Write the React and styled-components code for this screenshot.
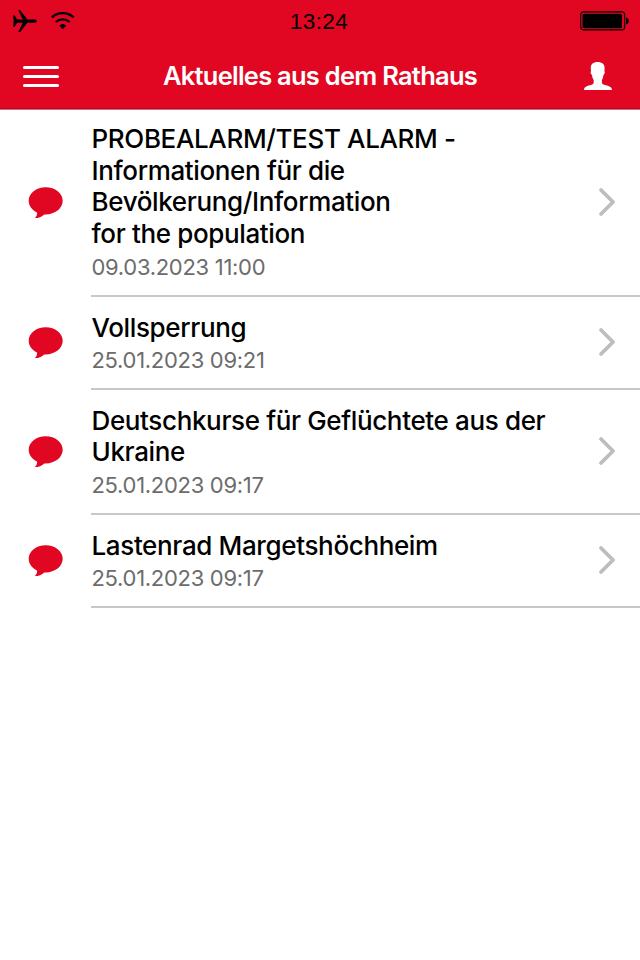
import React from "react";
import styled, { createGlobalStyle } from "styled-components";

const GlobalStyle = createGlobalStyle`
  :root {
    --color-red: #e10722;
    --color-red-dark: #b4061b;
    --color-red-soft: #d8707c;
    --color-white: #ffffff;
    --color-line: #c8c7cc;
    --color-date: #6c6c6c;
  }
  * {
    box-sizing: border-box;
  }
  body {
    margin: 0;
    background-color: var(--color-white);
    font-family: Inter, "Liberation Sans", sans-serif;
    overflow: hidden;
  }
`;

const Screen = styled.div`
  display: flex;
  flex-direction: column;
  width: 640px;
  height: 960px;
`;

const Header = styled.header`
  height: 110px;
  background-color: var(--color-red);
  border-bottom: 1px solid var(--color-red-soft);
  box-shadow: inset 0 -1px 0 var(--color-red-dark);
`;

const StatusBar = styled.div`
  display: grid;
  grid-template-columns: 1fr auto 1fr;
  align-items: center;
  height: 40px;
  padding: 0 11px 0 12px;
  .left {
    display: flex;
    align-items: center;
    gap: 13px;
  }
  .battery {
    justify-self: end;
  }
  svg {
    display: block;
  }
`;

const Clock = styled.time`
  font-family: "Liberation Sans", Arial, sans-serif;
  font-size: 22.5px;
  line-height: 40px;
  padding: 2px 3px 0 0;
  letter-spacing: 0.4px;
`;

const NavBar = styled.nav`
  display: grid;
  grid-template-columns: 60px 1fr 60px;
  align-items: center;
  height: 68px;
  padding: 4px 27px 0 23px;
  svg {
    display: block;
  }
  .user {
    justify-self: end;
  }
`;

const MenuButton = styled.div`
  display: flex;
  flex-direction: column;
  gap: 6px;
  width: 36px;
  margin-top: 1px;
  span {
    height: 3px;
    border-radius: 2px;
    background-color: var(--color-white);
  }
`;

const Title = styled.h1`
  margin: 0;
  padding-left: 4px;
  font-size: 25.5px;
  font-weight: 600;
  line-height: 32px;
  letter-spacing: -0.75px;
  color: var(--color-white);
  text-align: center;
  white-space: nowrap;
`;

const List = styled.ul`
  margin: 0;
  padding: 0;
  list-style: none;
`;

const Item = styled.li`
  display: flex;
  height: ${(props) => props.$height}px;
  svg {
    display: block;
  }
`;

const IconCell = styled.div`
  display: flex;
  align-items: center;
  width: 91px;
  padding: 0 0 2px 28px;
`;

const Body = styled.div`
  display: flex;
  flex: 1;
  align-items: center;
  justify-content: space-between;
  padding: 0 24px 1px 0.5px;
  border-bottom: 2px solid var(--color-line);
`;

const Info = styled.div`
  align-self: flex-start;
  padding-top: ${(props) => (props.$long ? 13.4 : 15)}px;
  h2 {
    margin: 0;
    font-size: 26px;
    font-weight: 450;
    line-height: ${(props) => (props.$long ? 31.5 : 31.3)}px;
    letter-spacing: -0.36px;
    white-space: nowrap;
  }
  h2 span {
    display: block;
  }
  p {
    margin: ${(props) => (props.$long ? 4 : 3)}px 0 0;
    font-size: 22px;
    line-height: 28px;
    letter-spacing: -0.3px;
    color: var(--color-date);
  }
`;

const news = [
  {
    lines: [
      "PROBEALARM/TEST ALARM -",
      "Informationen für die",
      "Bevölkerung/Information",
      "for the population",
    ],
    date: "09.03.2023 11:00",
    height: 187,
  },
  { lines: ["Vollsperrung"], date: "25.01.2023 09:21", height: 93 },
  {
    lines: ["Deutschkurse für Geflüchtete aus der", "Ukraine"],
    date: "25.01.2023 09:17",
    height: 125,
  },
  {
    lines: ["Lastenrad Margetshöchheim"],
    date: "25.01.2023 09:17",
    height: 93,
  },
];

const Plane = () => (
  <svg width="26" height="24" viewBox="0 0 26 24">
    <path d="M1 6.500h1.600l2.600 4H10.800L6.400 1.200h1.800L15.400 10.500h7c1.500 0 2.300.7 2.300 1.600s-.8 1.600-2.300 1.600h-7L8.200 23H6.400l4.400-9.300H5.200l-2.600 4H1l.7-5.600z" />
  </svg>
);

const Wifi = () => (
  <svg width="24" height="20" viewBox="0 0 24 20">
    <g fill="none" stroke="#000" strokeWidth="2.3">
      <path d="M.8 6.300a16.500 16.500 0 0 1 21.800 0" />
      <path d="M4.800 11a10.500 10.500 0 0 1 13.800 0" />
    </g>
    <path d="M11.700 18.300l-3.400-3.600a5 5 0 0 1 6.800 0z" />
  </svg>
);

const Battery = () => (
  <svg className="battery" width="49" height="20" viewBox="0 0 49 20">
    <rect x=".7" y=".9" width="44" height="18" rx="3" fill="none" stroke="#000" strokeWidth="1.1" />
    <rect x="2.500" y="2.700" width="39.500" height="14.600" rx="1.500" />
    <path d="M46 6.500c1.800.5 2.800 1.800 2.800 3.500s-1 3-2.800 3.500z" />
  </svg>
);

const User = () => (
  <svg className="user" width="30" height="30" viewBox="0 0 30 30" fill="#fff">
    <path d="M14.600 1c-4.300 0-7 2.200-6.800 6.300l.2 2.900c-.7.500-.4 2.800.8 3.600.4 2.300 1 4 1.900 5.200v2.500c0 1.500-1.300 2-3.800 2.700C3.200 25.200 1 26.100 1 29h28c0-2.900-2.500-3.800-6.200-4.800-2.600-.7-3.900-1.200-3.900-2.700V19c.8-1.200 1.300-2.900 1.700-5.200 1.200-.8 1.500-3.100.8-3.600l.2-2.900C21.800 3.200 18.900 1 14.600 1z" />
  </svg>
);

const Bubble = () => (
  <svg width="35" height="32" viewBox="0 0 35 32" fill="#e10722">
    <path d="M17.700.2C8.200.2.700 6.300.700 13.800c0 5 3.200 9.300 8.300 11.700.4 2-.5 4.300-2.300 5.600 4-.1 7.300-1.200 9.500-3.700 9.900.7 18.500-5.600 18.500-13.600C34.700 6.300 27.200.2 17.700.2z" />
  </svg>
);

const Chevron = () => (
  <svg width="18" height="30" viewBox="0 0 18 30">
    <path
      d="M3 3l12 12L3 27"
      fill="none"
      stroke="#bdbdbd"
      strokeWidth="3.800"
      strokeLinecap="round"
      strokeLinejoin="round"
    />
  </svg>
);

const App = () => {
  return (
    <>
      <GlobalStyle />
      <Screen>
        <Header>
          <StatusBar>
            <div className="left">
              <Plane />
              <Wifi />
            </div>
            <Clock>13:24</Clock>
            <Battery />
          </StatusBar>
          <NavBar>
            <MenuButton>
              <span />
              <span />
              <span />
            </MenuButton>
            <Title>Aktuelles aus dem Rathaus</Title>
            <User />
          </NavBar>
        </Header>
        <List>
          {news.map((item) => (
            <Item key={item.lines[0]} $height={item.height}>
              <IconCell>
                <Bubble />
              </IconCell>
              <Body>
                <Info $long={item.lines.length > 2}>
                  <h2>
                    {item.lines.map((line) => (
                      <span key={line}>{line}</span>
                    ))}
                  </h2>
                  <p>{item.date}</p>
                </Info>
                <Chevron />
              </Body>
            </Item>
          ))}
        </List>
      </Screen>
    </>
  );
};

export default App;
